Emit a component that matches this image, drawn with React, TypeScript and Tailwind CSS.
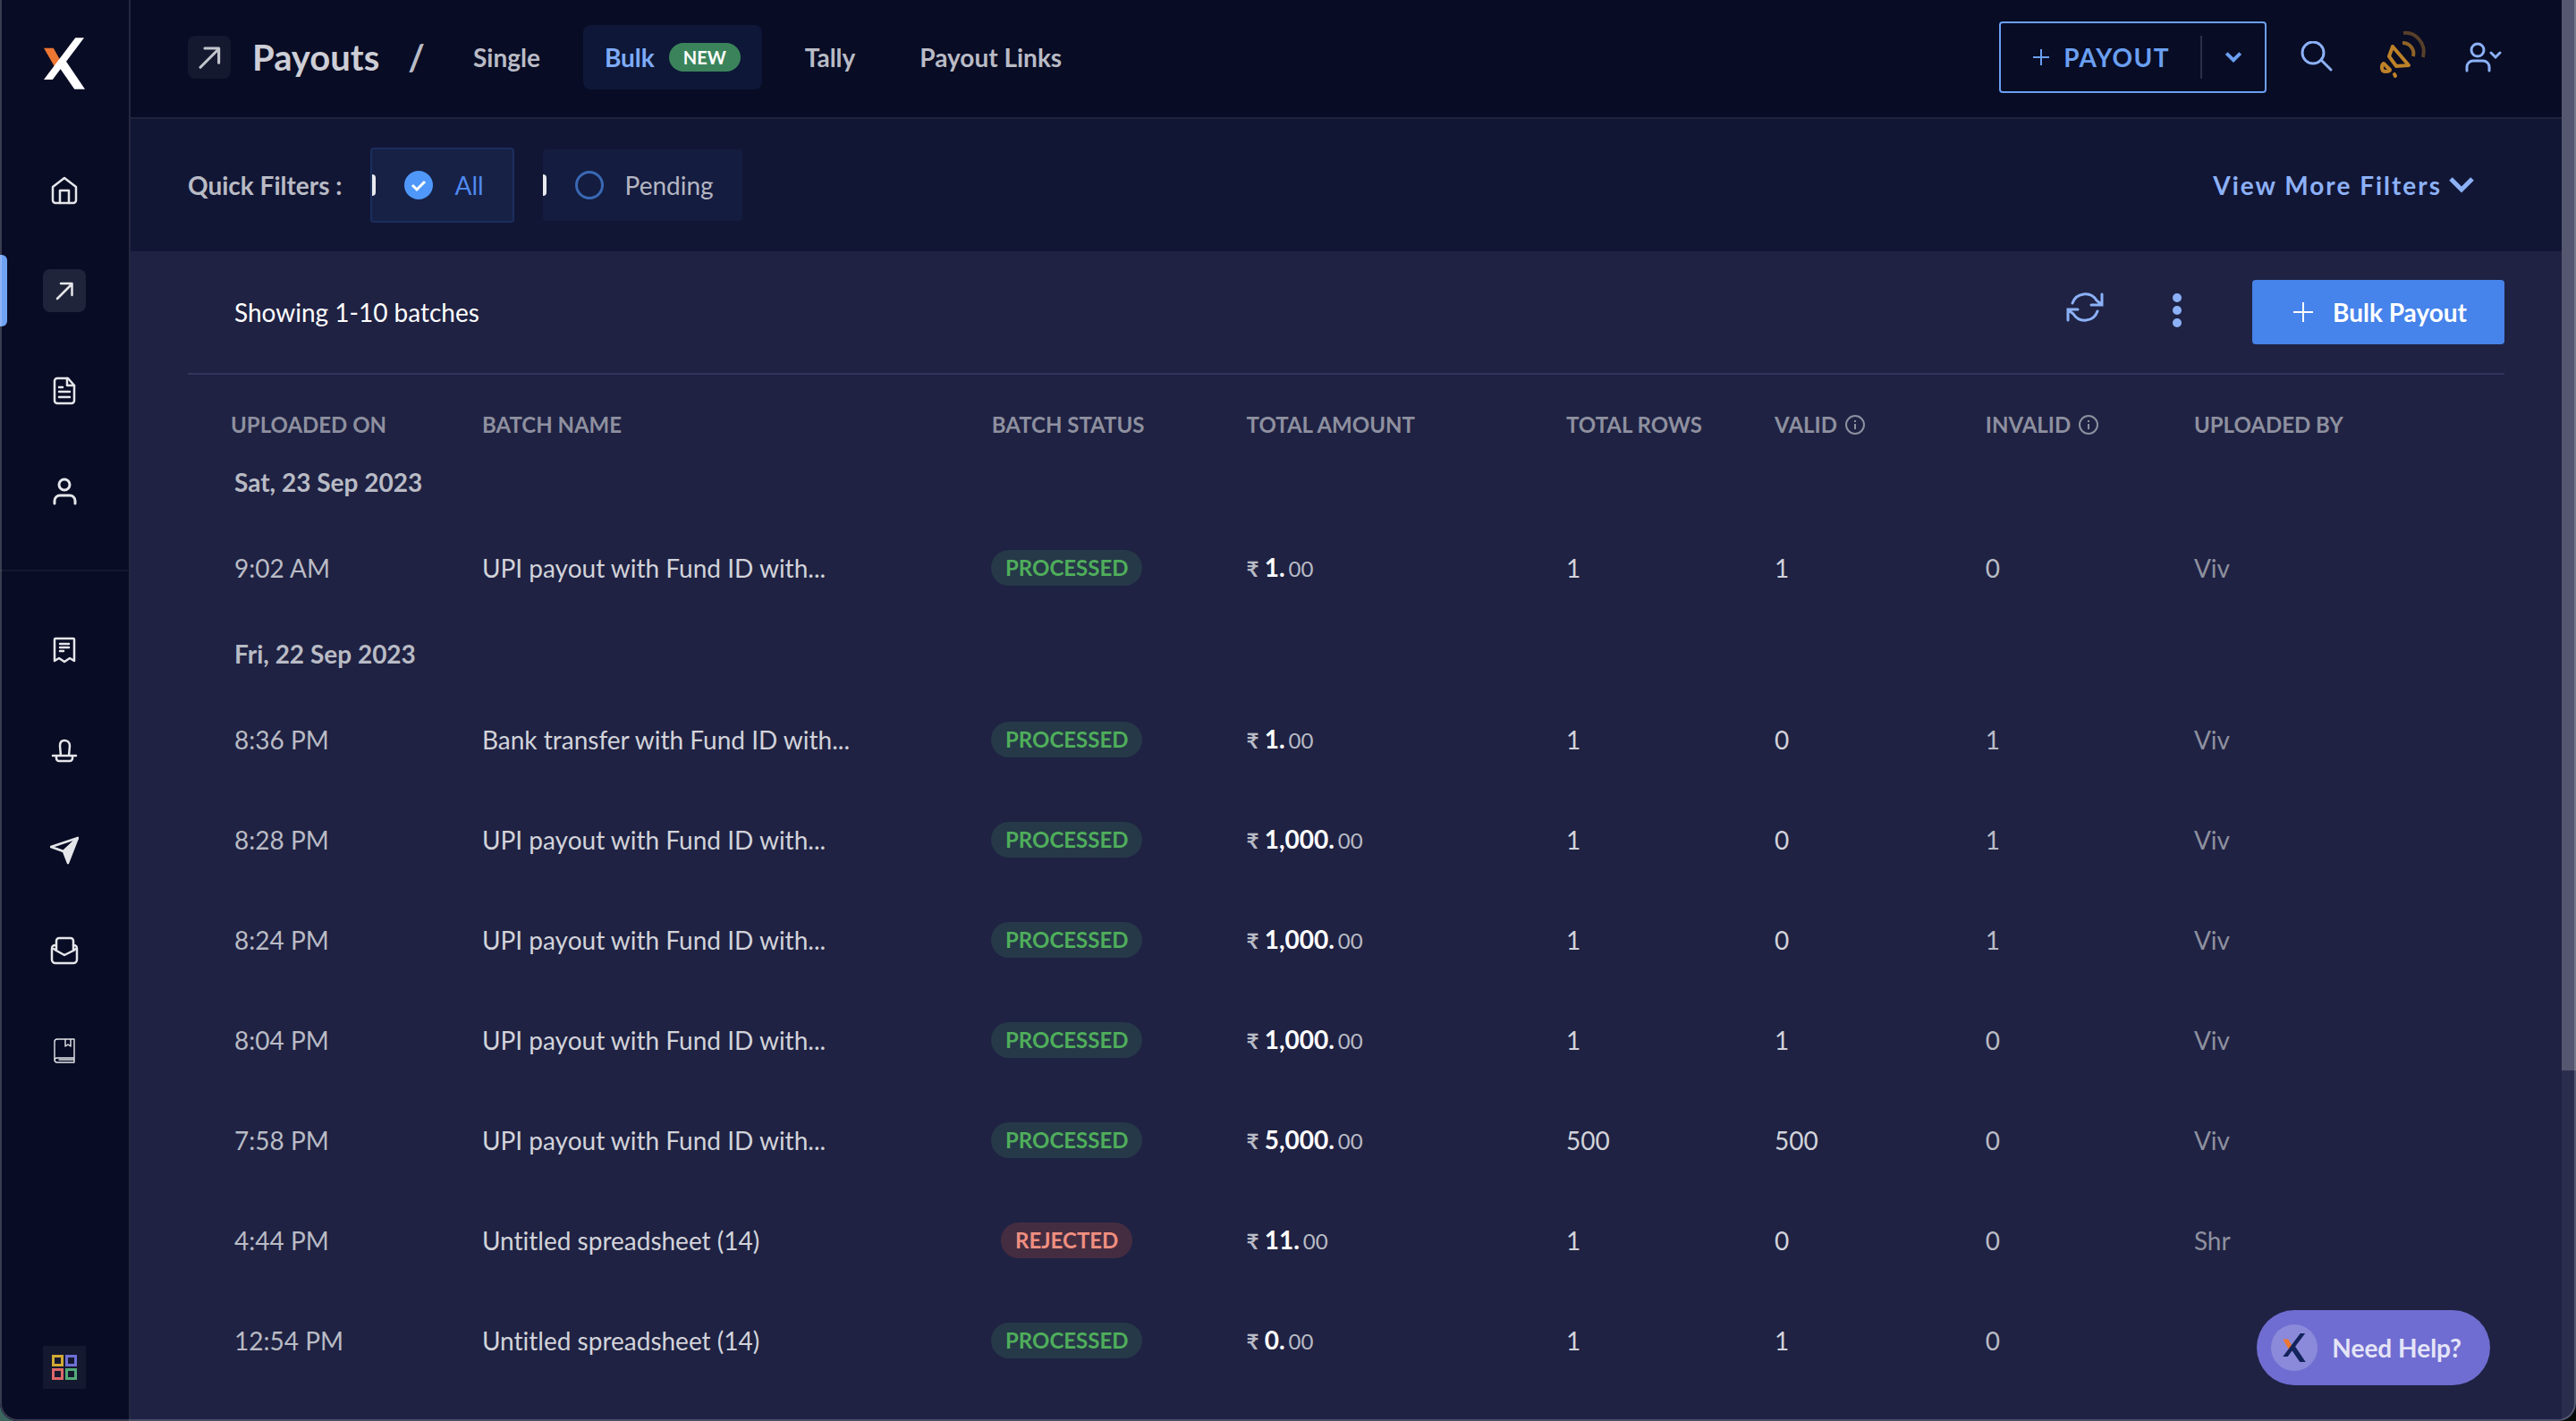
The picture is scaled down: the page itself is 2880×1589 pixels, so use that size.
import type { ReactNode } from 'react';

interface Batch {
  time: string;
  name: string;
  status: 'PROCESSED' | 'REJECTED';
  amount: string;
  rows: number;
  valid: number;
  invalid: number;
  by?: string;
}

interface BatchGroup {
  date: string;
  batches: Batch[];
}

const groups: BatchGroup[] = [
  {
    date: 'Sat, 23 Sep 2023',
    batches: [
      { time: '9:02 AM', name: 'UPI payout with Fund ID with...', status: 'PROCESSED', amount: '1', rows: 1, valid: 1, invalid: 0, by: 'Viv' },
    ],
  },
  {
    date: 'Fri, 22 Sep 2023',
    batches: [
      { time: '8:36 PM', name: 'Bank transfer with Fund ID with...', status: 'PROCESSED', amount: '1', rows: 1, valid: 0, invalid: 1, by: 'Viv' },
      { time: '8:28 PM', name: 'UPI payout with Fund ID with...', status: 'PROCESSED', amount: '1,000', rows: 1, valid: 0, invalid: 1, by: 'Viv' },
      { time: '8:24 PM', name: 'UPI payout with Fund ID with...', status: 'PROCESSED', amount: '1,000', rows: 1, valid: 0, invalid: 1, by: 'Viv' },
      { time: '8:04 PM', name: 'UPI payout with Fund ID with...', status: 'PROCESSED', amount: '1,000', rows: 1, valid: 1, invalid: 0, by: 'Viv' },
      { time: '7:58 PM', name: 'UPI payout with Fund ID with...', status: 'PROCESSED', amount: '5,000', rows: 500, valid: 500, invalid: 0, by: 'Viv' },
      { time: '4:44 PM', name: 'Untitled spreadsheet (14)', status: 'REJECTED', amount: '11', rows: 1, valid: 0, invalid: 0, by: 'Shr' },
      { time: '12:54 PM', name: 'Untitled spreadsheet (14)', status: 'PROCESSED', amount: '0', rows: 1, valid: 1, invalid: 0 },
    ],
  },
];

function Logo({ className, fill }: { className: string; fill: string }) {
  return (
    <svg viewBox="0 0 47 59" className={className} aria-hidden="true">
      <path d="M0 12h11l9 16-5 10z" fill="#ec7632" />
      <path d="M36 0h10L10 48H0z" fill={fill} />
      <path d="M15 30l9-5 23 34H35z" fill={fill} />
    </svg>
  );
}

function Icon({ children, className = 'size-8', width = 2.5 }: { children: ReactNode; className?: string; width?: number }) {
  return (
    <svg
      viewBox="0 0 32 32"
      className={className}
      fill="none"
      stroke="currentColor"
      strokeWidth={width}
      strokeLinecap="round"
      strokeLinejoin="round"
      aria-hidden="true"
    >
      {children}
    </svg>
  );
}

function ArrowIcon({ className }: { className?: string }) {
  return (
    <Icon className={className}>
      <path d="M8 25L24 9M12 8h12.5v13" />
    </Icon>
  );
}

function ChevronIcon({ className, width = 5 }: { className: string; width?: number }) {
  return (
    <svg viewBox="0 0 28 18" className={className} fill="none" stroke="currentColor" strokeWidth={width} aria-hidden="true">
      <path d="M2 2l12 12L26 2" />
    </svg>
  );
}

function InfoIcon() {
  return (
    <svg viewBox="0 0 24 24" className="size-6" fill="none" stroke="currentColor" strokeWidth="2" aria-hidden="true">
      <circle cx="12" cy="12" r="10" />
      <path d="M12 11v6M12 7v2" />
    </svg>
  );
}

const primaryNav = [
  {
    label: 'Home',
    icon: (
      <Icon>
        <path d="M3 12L16 2l13 10v15a3 3 0 0 1-3 3H6a3 3 0 0 1-3-3z" />
        <path d="M11 30V16h10v14" />
      </Icon>
    ),
  },
  { label: 'Payouts', active: true, icon: <ArrowIcon /> },
  {
    label: 'Invoices',
    icon: (
      <Icon>
        <path d="M8 2h12l7 8v17a3 3 0 0 1-3 3H8a3 3 0 0 1-3-3V5a3 3 0 0 1 3-3z" />
        <path d="M19 2v8h8M10 12h4M10 17h12M10 23h12" />
      </Icon>
    ),
  },
  {
    label: 'Contacts',
    icon: (
      <Icon width={3}>
        <circle cx="16" cy="9" r="6" />
        <path d="M5 30v-3a6 6 0 0 1 6-6h11a6 6 0 0 1 6 6v3" />
      </Icon>
    ),
  },
];

const secondaryNav = [
  {
    label: 'Vendor Payments',
    icon: (
      <Icon>
        <path d="M5 28V4a1 1 0 0 1 1-1h20a1 1 0 0 1 1 1v24l-5-3-6 4-6-4z" />
        <path d="M11 9h10M11 13h10M11 17h4" />
      </Icon>
    ),
  },
  {
    label: 'Tax Payments',
    icon: (
      <Icon>
        <path d="M12 22l-1-11c0-4 2-6 5-6s6 2 6 6l-1 11M3 22h26M7 22v3a3 3 0 0 0 3 3h12a3 3 0 0 0 3-3v-3" />
      </Icon>
    ),
  },
  {
    label: 'Payout Links',
    icon: (
      <Icon>
        <path d="M31 2L1 12l14 5z" />
        <path d="M31 2L15 17l5 13z" fill="currentColor" />
      </Icon>
    ),
  },
  {
    label: 'Mailbox',
    icon: (
      <Icon>
        <path d="M6 10c-3 0-4 1-4 4v12a4 4 0 0 0 4 4h20a4 4 0 0 0 4-4V14c0-3-1-4-4-4" />
        <path d="M4 14l3 2V5a3 3 0 0 1 3-3h13a3 3 0 0 1 3 3v11l3-2M7 16l9 5 10-5" />
      </Icon>
    ),
  },
  {
    label: 'Accounting',
    icon: (
      <Icon width={1.4}>
        <path d="M27 24V3H8a3 3 0 0 0-3 3v20a3 3 0 0 0 3 3h19v-5H8a3 3 0 0 0-3 3M10 26h16M17 3v8l3-2 3 2V3" />
      </Icon>
    ),
  },
];

function NavItem({ label, icon, active }: { label: string; icon: ReactNode; active?: boolean }) {
  return (
    <li className="relative flex h-28 items-center justify-center">
      {active && <span className="absolute left-0 h-20 w-2 rounded-r-md bg-[#70a2f4]" />}
      <a
        href="#"
        aria-label={label}
        className={`flex size-12 items-center justify-center rounded-lg text-[#e5e6ea] ${active ? 'bg-[#20243a]' : ''}`}
      >
        {icon}
      </a>
    </li>
  );
}

function Sidebar() {
  return (
    <nav className="flex w-[146px] shrink-0 flex-col border-r-2 border-[#24273f] bg-[#080c24]">
      <div className="flex h-[157px] items-start justify-center pt-[42px]">
        <Logo className="h-[58px] w-[46px]" fill="#ffffff" />
      </div>
      <ul>
        {primaryNav.map((item) => (
          <NavItem key={item.label} {...item} />
        ))}
      </ul>
      <ul className="mt-8 border-t-2 border-[#14182f] pt-8">
        {secondaryNav.map((item) => (
          <NavItem key={item.label} {...item} />
        ))}
      </ul>
      <button aria-label="All apps" className="mx-auto mt-auto mb-9 grid size-12 grid-cols-[13px_13px] content-center justify-center gap-0.5 bg-[#151930]">
        <span className="size-[13px] border-3 border-[#d2aa33]" />
        <span className="size-[13px] border-3 border-[#6f6fd6]" />
        <span className="size-[13px] border-3 border-[#dc6868]" />
        <span className="size-[13px] border-3 border-[#52ab76]" />
      </button>
    </nav>
  );
}

function Header() {
  return (
    <header className="flex h-[133px] items-start justify-between border-b-2 border-[#20243a] bg-[#080c24] px-16">
      <div className="flex items-center pt-7">
        <span className="flex size-12 items-center justify-center rounded-lg bg-[#151930] text-[#c3c5cd]">
          <ArrowIcon className="size-10" />
        </span>
        <h1 className="ml-6 text-[40px] leading-[72px] font-bold text-[#cdced6]">Payouts</h1>
        <span className="ml-8 text-[40px] leading-[72px] font-bold text-[#b9bbc5]">/</span>
        <div className="ml-7.5 flex h-18 items-center text-[28px] font-bold text-[#b9bbc5]">
          <a href="#" className="px-6">Single</a>
          <a href="#" className="ml-6 flex h-18 items-center rounded-lg bg-[#0e1737] px-6 text-[#7eabf7]">
            Bulk
            <span className="ml-4 rounded-full bg-[#3b845b] px-4 text-xl leading-8 text-white">NEW</span>
          </a>
          <a href="#" className="ml-6 px-6">Tally</a>
          <a href="#" className="ml-6 px-6">Payout Links</a>
        </div>
      </div>
      <div className="flex items-center pt-6 text-[#8cb1f7]">
        <div className="flex h-20 items-center rounded-sm border-2 border-[#6a9ff2] text-[#6a9ff2]">
          <button className="flex h-full items-center gap-4 pr-8.5 pl-9 text-[28px] font-bold tracking-wider">
            <svg viewBox="0 0 18 18" className="size-[18px]" stroke="currentColor" strokeWidth="2" aria-hidden="true">
              <path d="M9 0v18M0 9h18" />
            </svg>
            PAYOUT
          </button>
          <span className="h-12 w-0.5 bg-[#2b2f47]" />
          <button aria-label="More payout options" className="flex h-full items-center px-6.5">
            <ChevronIcon className="h-3 w-[18px]" width={6} />
          </button>
        </div>
        <button aria-label="Search" className="ml-9.5">
          <svg viewBox="0 0 36 36" className="size-9" fill="none" stroke="currentColor" strokeWidth="3" strokeLinecap="round" aria-hidden="true">
            <circle cx="14" cy="13" r="12" />
            <path d="M23 21l11 11" />
          </svg>
        </button>
        <button aria-label="Announcements" className="ml-13">
          <svg viewBox="0 0 56 56" className="size-14 overflow-visible" fill="none" stroke="#bd8228" strokeWidth="4" strokeLinejoin="round" aria-hidden="true">
            <path d="M15 16l18 21-14 1-8-11z" />
            <path d="M5 35c-3 2-3 9 2 9 3 0 5-1 5-2z" />
            <path d="M17 47l1 2" strokeLinecap="round" />
            <path d="M26 12a12 12 0 0 1 12 15" stroke="#8f6426" />
            <path d="M27 1C40-1 53 12 49 28" stroke="#573f29" />
          </svg>
        </button>
        <button aria-label="Account" className="ml-10">
          <svg viewBox="0 0 44 36" className="h-9 w-11" fill="none" stroke="currentColor" strokeWidth="3" strokeLinecap="round" aria-hidden="true">
            <circle cx="14" cy="10" r="7" />
            <path d="M2 33v-4a7 7 0 0 1 7-7h11a7 7 0 0 1 7 7v4" />
            <path d="M29 13l5 5 5-5" />
          </svg>
        </button>
      </div>
    </header>
  );
}

function QuickFilter({ label, checked }: { label: string; checked?: boolean }) {
  return (
    <label
      className={`flex h-20 items-center rounded-sm pr-8 text-[28px] ${
        checked ? 'box-content border-2 border-[#1b2e5d] bg-[#172146] text-[#4f8af0]' : 'bg-[#141c40] text-[#b4b6c2]'
      }`}
    >
      <input type="radio" name="quick-filter" defaultChecked={checked} className="h-6 w-1 appearance-none rounded-r-sm bg-[#e9eaee]" />
      {checked ? (
        <svg viewBox="0 0 32 32" className="ml-8 size-8" aria-hidden="true">
          <circle cx="16" cy="16" r="16" fill="#4f98fa" />
          <path d="M9 16l5 5 9-9" fill="none" stroke="#fff" strokeWidth="3" />
        </svg>
      ) : (
        <svg viewBox="0 0 32 32" className="ml-8 size-8" aria-hidden="true">
          <circle cx="16" cy="16" r="14.5" fill="none" stroke="#3a69b4" strokeWidth="3" />
        </svg>
      )}
      <span className="ml-6">{label}</span>
    </label>
  );
}

function FilterBar() {
  return (
    <section className="flex h-37 items-center bg-[#121635] pr-24.5 pl-16">
      <span className="text-[28px] font-bold text-[#b9bbc5]">Quick Filters :</span>
      <div className="ml-8 flex items-center gap-8">
        <QuickFilter label="All" checked />
        <QuickFilter label="Pending" />
      </div>
      <button className="ml-auto flex items-center gap-2 text-[28px] font-bold tracking-[2px] text-[#8cb1f7]">
        View More Filters
        <ChevronIcon className="h-[18px] w-7" />
      </button>
    </section>
  );
}

function StatusPill({ status }: { status: Batch['status'] }) {
  return (
    <span className="flex w-42 justify-center">
      <span
        className={`rounded-full px-4 text-2xl leading-10 font-bold ${
          status === 'PROCESSED' ? 'bg-[#263948] text-[#4fae5b]' : 'bg-[#452d41] text-[#f08f80]'
        }`}
      >
        {status}
      </span>
    </span>
  );
}

function BatchRow({ batch }: { batch: Batch }) {
  return (
    <tr className="h-28">
      <td className="pl-[52px] text-[#b9bbc5]">{batch.time}</td>
      <td>{batch.name}</td>
      <td>
        <StatusPill status={batch.status} />
      </td>
      <td className="text-2xl text-[#b9bbc5]">
        <span className="font-bold">₹</span> <span className="text-[28px] font-bold text-white">{batch.amount}.</span>
        <span className="ml-1">00</span>
      </td>
      <td>{batch.rows}</td>
      <td>{batch.valid}</td>
      <td className="text-[#b9bbc5]">{batch.invalid}</td>
      <td className="text-[#8e909f]">{batch.by}</td>
    </tr>
  );
}

function BatchTable() {
  return (
    <table className="w-full table-fixed text-left text-[28px] text-[#d2d3da]">
      <thead>
        <tr className="h-20 text-2xl text-[#8e909f]">
          <th className="w-[12.7%] pt-8 pl-12">UPLOADED ON</th>
          <th className="w-[22%] pt-8">BATCH NAME</th>
          <th className="w-[11%] pt-8">BATCH STATUS</th>
          <th className="w-[13.8%] pt-8">TOTAL AMOUNT</th>
          <th className="w-[9%] pt-8">TOTAL ROWS</th>
          <th className="w-[9.1%] pt-8">
            <span className="flex items-center gap-2">VALID <InfoIcon /></span>
          </th>
          <th className="w-[9%] pt-8">
            <span className="flex items-center gap-2">INVALID <InfoIcon /></span>
          </th>
          <th className="pt-8">UPLOADED BY</th>
        </tr>
      </thead>
      {groups.map((group) => (
        <tbody key={group.date}>
          <tr className="h-20">
            <th colSpan={8} className="pl-[52px] font-bold text-[#b9bbc5]">{group.date}</th>
          </tr>
          {group.batches.map((batch) => (
            <BatchRow key={batch.time} batch={batch} />
          ))}
        </tbody>
      ))}
    </table>
  );
}

export default function App() {
  return (
    <div className="min-h-screen bg-linear-to-r from-[#3d6661] to-[#050a08] font-['Lato',sans-serif] [font-variant-ligatures:none]">
      <div className="relative flex min-h-screen overflow-hidden rounded-b-[20px] bg-[#1f2243]">
        <Sidebar />
        <main className="min-w-0 flex-1">
          <Header />
          <FilterBar />
          <section className="px-16">
            <div className="flex h-[138px] items-center border-b-2 border-[#32355a]">
              <p className="pl-[52px] text-[28px] text-white">Showing 1-10 batches</p>
              <button aria-label="Refresh" className="mb-3 ml-auto text-[#8cb1f7]">
                <svg viewBox="0 0 42 36" className="h-9 w-[42px]" fill="none" stroke="currentColor" strokeWidth="3" strokeLinecap="round" aria-hidden="true">
                  <path d="M7 14a15 15 0 0 1 27-3l5 4M40 4v12H28" />
                  <path d="M35 23a15 15 0 0 1-27 3l-5-4M2 33V21h11" />
                </svg>
              </button>
              <button aria-label="More actions" className="mb-1 ml-18.5 flex w-4 flex-col items-center gap-1 text-[#8cb1f7]">
                <span className="size-2.5 rounded-full bg-current" />
                <span className="size-2.5 rounded-full bg-current" />
                <span className="size-2.5 rounded-full bg-current" />
              </button>
              <button className="ml-19 flex h-18 items-center gap-5.5 rounded-sm bg-[#4683ea] pr-10.5 pl-11.5 text-[28px] font-bold text-white">
                <svg viewBox="0 0 22 22" className="size-[22px]" stroke="currentColor" strokeWidth="2" aria-hidden="true">
                  <path d="M11 0v22M0 11h22" />
                </svg>
                Bulk Payout
              </button>
            </div>
            <BatchTable />
          </section>
        </main>
        <div className="w-4 shrink-0 bg-[#2b2d4c]">
          <div className="h-[75.3%] bg-[#55566f]" />
        </div>
        {/* Window outline */}
        <div className="pointer-events-none absolute inset-0 rounded-b-[20px] border-x-2 border-b-2 border-white/20" />
      </div>
      <button className="fixed right-24 bottom-10 flex h-21 items-center gap-4 rounded-full bg-[#6f6dd1] px-4 pr-8 text-[28px] font-bold text-[#e4e4f7]">
        <span className="flex size-13 items-center justify-center rounded-full bg-[#8b8ada]">
          <Logo className="h-8 w-[26px]" fill="#13235b" />
        </span>
        Need Help?
      </button>
    </div>
  );
}
